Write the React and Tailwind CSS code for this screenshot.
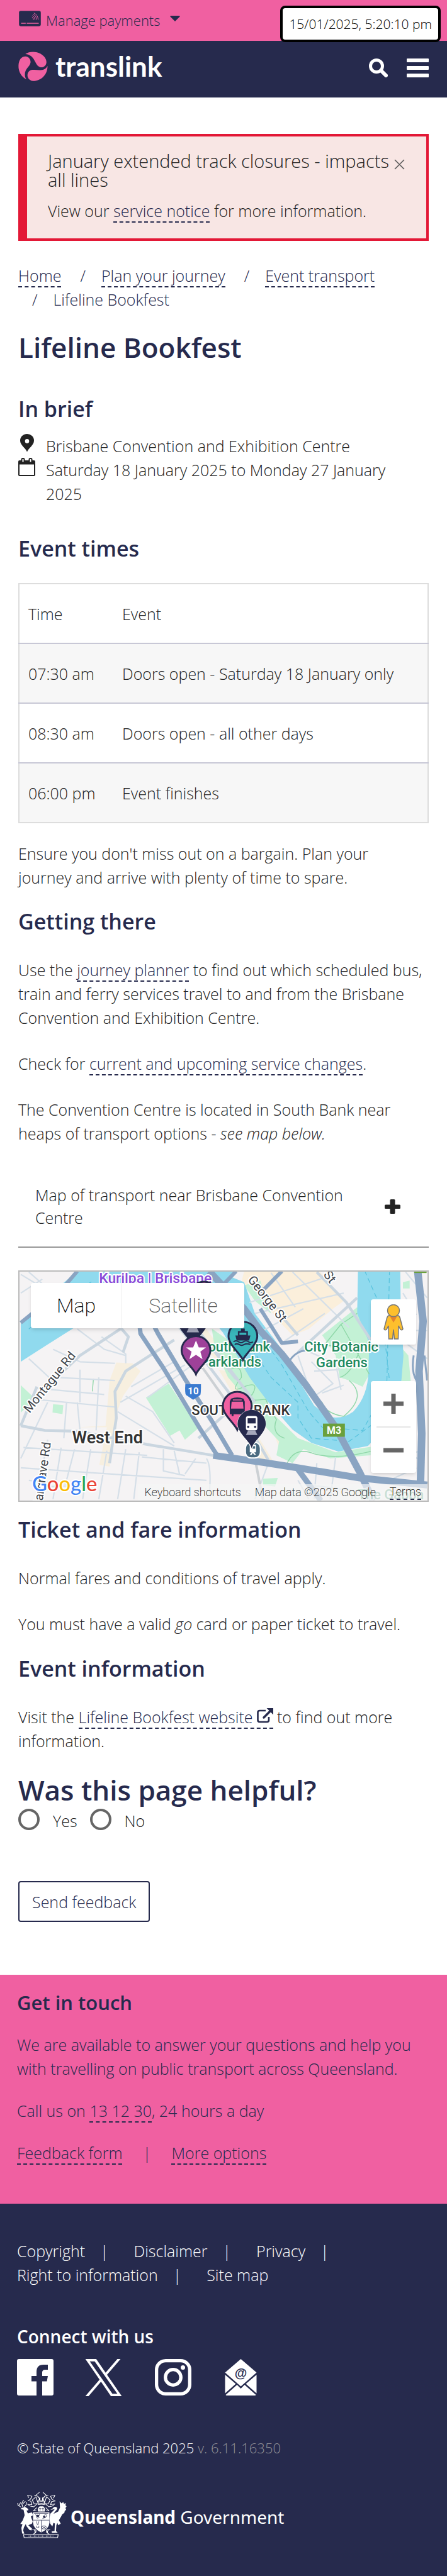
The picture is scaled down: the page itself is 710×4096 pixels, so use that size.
const body = "font-['Open_Sans',sans-serif] font-light";

function Dash({ href = "#", children }) {
  return (
    <a href={href} className="border-b-2 border-dashed border-[#262a4d] text-[#262a4d]">
      {children}
    </a>
  );
}

function H2({ className = "", children }) {
  return <h2 className={`text-[34px] leading-10 font-semibold text-[#262a4d] ${className}`}>{children}</h2>;
}

function CardIcon() {
  return (
    <svg viewBox="0 0 176 124" className="h-[25px] w-[35px]" aria-hidden="true">
      <rect x="1" y="1" width="174" height="122" rx="14" fill="#262a4d" />
      <g fill="none" stroke="#f060a1" strokeWidth="5" strokeLinecap="round">
        <path d="M20 100H52M65 100H156" strokeWidth="7" />
        <path d="M106 50Q116 55 117 70M110 39Q127 48 129 70M115 28Q139 40 142 70M121 18Q152 32 154 70" />
      </g>
    </svg>
  );
}

function LogoMark() {
  return (
    <svg viewBox="22 348 236 236" className="size-[47px]" fill="#f060a1" aria-hidden="true">
      <path d="M78 368C110 345 165 345 200 365C235 385 250 415 246 440C240 473 205 483 182 465C152 440 150 372 78 368Z" />
      <path d="M85 387C105 390 122 410 120 435C115 470 73 485 75 535C76 550 80 562 88 570C50 555 22 510 24 460C26 410 50 383 85 387Z" />
      <path d="M255 462C258 520 215 582 140 583C110 580 92 555 96 530C102 500 125 492 150 494C190 497 235 505 255 462Z" />
    </svg>
  );
}

function SearchIcon() {
  return (
    <svg viewBox="0 0 30 30" className="size-[30px]" fill="none" stroke="#fff" aria-hidden="true">
      <circle cx="12" cy="12" r="9.500" strokeWidth="5" />
      <path d="M19.500 19.500L27 27" strokeWidth="6" strokeLinecap="round" />
    </svg>
  );
}

function MenuIcon() {
  return (
    <svg viewBox="0 0 35 30" className="h-[30px] w-[35px]" fill="#fff" aria-hidden="true">
      <rect width="35" height="6" rx="1" />
      <rect y="12" width="35" height="6" rx="1" />
      <rect y="24" width="35" height="6" rx="1" />
    </svg>
  );
}

function PinIcon() {
  return (
    <svg viewBox="0 0 22 29" className="ml-[3px] h-[29px] w-[22px]" aria-hidden="true">
      <path fillRule="evenodd" fill="#222" d="M11 28.500C8.500 22 0 18 0 10.500A11 10.500 0 0 1 22 10.500C22 18 13.500 22 11 28.500ZM11 8A3.300 3.400 0 1 0 11 14.800A3.300 3.400 0 1 0 11 8Z" />
    </svg>
  );
}

function CalendarIcon() {
  return (
    <svg viewBox="0 0 27 29" className="h-[29px] w-[27px]" aria-hidden="true">
      <path fill="#222" fillRule="evenodd" d="M2 4H25A2 2 0 0 1 27 6V27A2 2 0 0 1 25 29H2A2 2 0 0 1 0 27V6A2 2 0 0 1 2 4ZM2 10.500V27H25V10.500Z" />
      <rect x="5.500" y="1" width="4" height="6.500" rx="1.500" fill="#fff" stroke="#222" strokeWidth="2" />
      <rect x="17.500" y="1" width="4" height="6.500" rx="1.500" fill="#fff" stroke="#222" strokeWidth="2" />
    </svg>
  );
}

function ExternalIcon() {
  return (
    <svg viewBox="0 0 26 24" className="ml-1.5 inline h-6 w-[26px] align-baseline" aria-hidden="true">
      <path d="M14 4H4.500Q1.500 4 1.500 7V19Q1.500 22 4.500 22H16Q19 22 19 19V14" fill="none" stroke="#262a4d" strokeWidth="2.600" />
      <path d="M11 15L22 4" stroke="#262a4d" strokeWidth="3.500" strokeLinecap="round" />
      <path d="M15.500 0H26V10.500Z" fill="#262a4d" />
    </svg>
  );
}

function MarkerShape({ x, y, w, h, fill, stroke, halo, children }) {
  return (
    <svg x={x} y={y} width={w} height={h} viewBox="0 0 50 66" overflow="visible">
      {halo && <path d="M25 63C21 53 3 39 3 25A22 22 0 0 1 47 25C47 39 29 53 25 63Z" fill="#fff" stroke="#fff" strokeWidth="6" />}
      <path d="M25 63C21 53 2 39 2 25A23 23 0 0 1 48 25C48 39 29 53 25 63Z" fill={fill} stroke={stroke} strokeWidth="3" />
      {children}
    </svg>
  );
}

function TrainGlyph() {
  return (
    <g>
      <rect x="15" y="11" width="20" height="25" rx="4" fill="#fff" />
      <rect x="18" y="15" width="14" height="9" fill="#262a4d" />
      <circle cx="19" cy="30" r="2" fill="#262a4d" />
      <circle cx="31" cy="30" r="2" fill="#262a4d" />
      <path d="M19 36H31L35 44H15Z" fill="#a5a7bb" />
    </g>
  );
}

function MapArt() {
  const s = { vectorEffect: "non-scaling-stroke" };
  return (
    <svg viewBox="0 0 652 368" preserveAspectRatio="xMidYMid slice" className="block h-full w-full font-['Roboto',sans-serif]" role="img" aria-label="Map of transport near Brisbane Convention Centre">
      <rect width="652" height="368" fill="#f5f3f4" />
      <g transform="translate(-10.9 -14.7) scale(.4301 .2496)" strokeLinejoin="round">
        {/* business precincts */}
        <path fill="#fbefdb" d="M860 60H1140L1230 250L1190 300L1100 430L1040 470L1000 400L920 230L850 130Z" />
        <path fill="#f7efdf" d="M385 645L445 650L475 700L410 860L390 950L375 1090L360 1312L322 1300L350 1060L240 1060L345 1050L360 760ZM765 690L800 700L870 900L905 1100L965 1270L915 1265L880 1100L820 850ZM960 1050L1070 1170L1000 1240Z" />
        <path fill="#f7efdf" d="M640 430L720 430L790 600L840 800L800 700L740 600Z" />
        {/* parks */}
        <g fill="#c3f1d5">
          <path d="M740 427L800 500L850 640L940 860L960 960L1060 1130L1200 1220L1330 1185V1240L1180 1260L1080 1200L1040 1290L980 1240L990 1150L930 1040L880 900L800 740L750 550Z" />
          <path d="M1280 290L1150 470L1200 600L1215 740L1250 760L1300 800L1325 720V500Z" />
          <path d="M495 870L580 780L690 1065L640 1140L620 1080L585 1115Z" />
          <path d="M30 790L85 880L30 965ZM150 912L188 918L185 975L148 965ZM860 150L920 120L960 330L900 250ZM930 1390L985 1385L975 1440L930 1430ZM1450 130L1475 120L1475 170H1450ZM1450 560L1470 600L1480 780L1440 760Z" />
        </g>
        {/* river */}
        <g fill="#90daee">
          <path d="M240 60H820L780 150L700 180L520 200L390 300L230 420L120 540L30 640V390L130 220Z" />
          <path d="M560 60H760L860 130L900 330L1000 560L1060 750L1120 920L1170 990Q1220 1015 1265 960Q1320 860 1322 700L1325 520L1280 330L1283 60H1440L1442 300L1452 600L1440 850L1390 1050L1320 1180L1210 1215L1110 1160L1040 1075L950 900L880 740L830 590L780 450L700 280Z" />
        </g>
        {/* ferry routes */}
        <g fill="none" stroke="#57c2dd" strokeWidth="1.200" strokeDasharray="8 5">
          <path style={s} d="M60 430L200 220L300 120M890 560L960 740L1060 900L1060 1000L1110 1130L1250 1150L1370 1000L1400 760L1370 300L1310 65M890 400L1000 660L1100 960L1150 1060L1300 1080L1390 800L1400 65" />
        </g>
        {/* paths inside the parks */}
        <g fill="none" stroke="#8fd7a8" strokeWidth="1.400">
          <path style={s} d="M800 700Q850 640 850 740Q800 850 860 800Q920 760 890 850Q850 900 940 880Q960 960 980 1010Q960 1100 1010 1130M1280 330L1220 400L1150 550M1220 400L1325 720M1150 540L1325 520M1215 740Q1260 720 1290 560M1020 1290Q1050 1180 1120 1230Q1200 1270 1330 1215M1250 760Q1320 860 1230 990Q1160 970 1150 900M300 750L296 830" />
        </g>
        {/* local streets */}
        <g fill="none" stroke="#d5dfe8" strokeWidth="2.200">
          <path style={s} d="M30 1260L130 900M40 1190L500 1240M30 1320L280 1350L720 1400M60 1400L300 1440M80 880L380 930M90 810L340 850M160 740L380 760M250 690L250 900M320 740L310 1080M200 900L190 1130M240 900L250 1080M130 1140L90 1500M180 1190L150 1520M230 1200L200 1400M290 1200L260 1520M350 1210L320 1520M420 1200L390 1520M470 1220L450 1520M560 1200V1340L640 1370M600 1210L620 1360M680 1260L640 1360M390 960L600 1180M400 900L480 820L640 660M420 860L520 960L600 1160M500 870L700 620M440 800L600 640M330 480L420 590L420 650M240 430L340 560L420 600M150 560L250 640L380 650M60 620L160 780M720 1260Q740 1310 730 1500M480 1250L720 1290M30 80L240 300M60 65L150 200M30 200L110 110M120 1440L310 1430M880 260L1160 100M900 330L1230 200M960 70L1050 290M1040 65L1250 420M930 440L1080 300M1000 520L1160 330M1060 600L1120 900L1180 980M1080 560L1200 650L1220 820M1110 640L1190 780L1130 850M1120 700L1220 690M1150 840L1230 790M950 1290L900 1520M1060 1400L1100 1520M1130 1290L1120 1520M1200 1250L1180 1520M1110 1430L1320 1480M1450 1060L1490 800M1440 1190L1530 1290M1450 1250L1530 1200M1400 1400L1500 1320M1450 200L1500 340M1460 65L1540 230M1450 440H1540M1460 520L1540 620" />
        </g>
        {/* main streets */}
        <g fill="none" stroke="#cad6e0" strokeWidth="4.500">
          <path style={s} d="M30 1050L120 1080L240 1085L500 1170L745 1240M360 1290L385 1000L380 830L420 700L600 500M340 300L430 480L410 580M90 860L250 600L400 430M30 1050L90 800M620 420L800 830L950 1270M680 420L830 750M750 560L900 900M800 960L690 1130M1130 65L1240 260L1330 500M1280 230L1060 580M1000 350L1060 470" />
        </g>
        {/* railway */}
        <path style={s} d="M690 640L780 860L850 1040L900 1260L930 1525" fill="none" stroke="#ccd0d4" strokeWidth="4" />
        {/* motorways */}
        <g fill="none" stroke="#8aa4c2">
          <path style={s} strokeWidth="11" d="M730 60L860 300L920 440L1000 590L1090 790L1200 1060L1290 1350L1340 1530" />
          <path style={s} strokeWidth="11" d="M745 1240L930 1285L1060 1320L1290 1385L1540 1430" />
          <path style={s} strokeWidth="7" d="M470 380L475 460L560 680L700 1080L760 1240M510 360L540 460L640 750L740 1020L815 1240" />
          <path style={s} strokeWidth="9" d="M1060 1330L1145 1530" />
          <path style={s} strokeWidth="12" d="M1505 60L1525 380L1510 700L1520 1100L1515 1430" />
          <path style={s} strokeWidth="6" d="M240 60L180 180L30 390M540 60L560 140M830 60L780 150M920 200L1000 60M920 300L1000 520L1060 510" />
          <path style={s} strokeWidth="3" d="M1030 630Q1060 560 1100 570M1490 600Q1480 700 1500 760M1530 600L1540 760" />
        </g>
        <path fill="#6aa03c" d="M1492 60H1538V71H1492Z" />
      </g>

      {/* place names */}
      <g stroke="#fff" strokeWidth="4" strokeLinejoin="round" paintOrder="stroke" fontWeight="500">
        <text x="127" y="19" fontSize="23" fill="#8a4bd8">Kurilpa | Brisbane</text>
        <g fontSize="22" fill="#1f8a60">
          <text x="455" y="129">City Botanic</text>
          <text x="474" y="154">Gardens</text>
          <text x="288" y="129">South Bank</text>
          <text x="288" y="153">Parklands</text>
          <text x="540" y="365" opacity="0.700">The Gabba</text>
        </g>
        <text x="84" y="276" fontSize="27" fill="#333" fontWeight="600">West End</text>
        <g fontSize="22" fill="#333">
          <text x="275" y="230">SOUTH</text>
          <text x="374" y="230">BANK</text>
        </g>
        <g fontSize="20" fill="#40444a" fontWeight="400">
          <text transform="translate(16 228) rotate(-51)">Montague Rd</text>
          <text transform="translate(364 14) rotate(52)">George St</text>
          <text transform="translate(485 6) rotate(52)">St</text>
          <text transform="translate(35 382) rotate(-82)">Hargrave Rd</text>
        </g>
      </g>

      {/* route shields */}
      <rect x="485" y="244" width="35" height="21" fill="#6aa03c" />
      <text x="491" y="260" fontSize="16" fontWeight="700" fill="#fff">M3</text>
      <path d="M265 181H290Q290 196 289 198L277.500 206L266 198Q264 195 265 181Z" fill="#3b7bd0" />
      <text x="269" y="197" fontSize="15" fontWeight="700" fill="#fff">10</text>

      {/* stops */}
      <MarkerShape x="270" y="15" w="50" h="66" fill="#f060a1" stroke="#262a4d" />
      <MarkerShape x="252" y="54" w="50" h="66" fill="#262a4d" stroke="#262a4d"><TrainGlyph /></MarkerShape>
      <MarkerShape x="332" y="79" w="50" h="66" fill="#39b5ba" stroke="#262a4d">
        <path d="M22 13H28V17H33V24H37L35 32H15L13 24H17V17H22Z" fill="#262a4d" />
        <path d="M19.500 19.500H30.500V23H19.500Z" fill="#39b5ba" />
        <path d="M10 34Q14 31 18 34T26 34T34 34T41 34M12 38.500Q15 36 19 38.500T27 38.500T37 38.500" fill="none" stroke="#262a4d" strokeWidth="2" />
      </MarkerShape>
      <MarkerShape x="257" y="102" w="50" h="66" fill="#9e4199" stroke="#262a4d">
        <path d="M25 9L29.500 20H41L32 27L35.500 39L25 32L14.500 39L18 27L9 20H20.500Z" fill="#fff" />
      </MarkerShape>
      <MarkerShape x="323" y="191" w="50" h="66" fill="#f060a1" stroke="#262a4d">
        <path fill="#262a4d" fillRule="evenodd" d="M15 13Q25 9 35 13L37 18V38H34V41H31V38H19V41H16V38H13V18ZM16 18L15 29H35L34 18ZM18 14.500V16H32V14.500Z" />
      </MarkerShape>
      <rect x="361" y="274" width="24" height="25" rx="9" fill="#4a6a80" stroke="#fff" strokeWidth="2" />
      <path fill="#fff" fillRule="evenodd" d="M368 278H378V290H375L378 294H375L373 291L371 294H368L371 290H368ZM369.500 280V284H376.500V280Z" />
      <MarkerShape x="348" y="221" w="46" h="62" fill="#262a4d" stroke="#262a4d" halo><TrainGlyph /></MarkerShape>

      <text x="20" y="352" fontSize="33" fontWeight="500" stroke="#fff" strokeWidth="4" paintOrder="stroke" strokeLinejoin="round" className="font-['Lato',sans-serif]">
        <tspan fill="#4285f4">G</tspan><tspan fill="#ea4335">o</tspan><tspan fill="#fbbc05">o</tspan><tspan fill="#4285f4">g</tspan><tspan fill="#34a853">l</tspan><tspan fill="#ea4335">e</tspan>
      </text>
    </svg>
  );
}

function Pegman() {
  return (
    <svg viewBox="0 0 32 56" className="h-[56px] w-8" aria-hidden="true">
      <path d="M8 18H24Q26 19 27 24L31 39Q30 42 27 40L24 34L23.500 55H17.500L16 40L14.500 55H8.500L8 34L5 40Q2 42 1 39L5 24Q6 19 8 18Z" fill="#fdbf2d" stroke="#777" strokeWidth="1.500" />
      <path d="M10 18.500H22L16 29Z" fill="#e5832d" />
      <circle cx="16" cy="10" r="9.500" fill="#fdbf2d" stroke="#777" strokeWidth="1.500" />
    </svg>
  );
}

function TransportMap() {
  return (
    <div className="relative mt-9 h-[368px] overflow-hidden border-2 border-[#bbb] font-['Roboto',sans-serif] font-light">
      <MapArt />
      <div className="absolute top-[18px] left-[18px] flex h-[72px] rounded-sm bg-white text-[32px] shadow-md">
        <button type="button" className="w-[145px] border-r border-[#eee] font-extralight text-black">Map</button>
        <button type="button" className="w-[194px] font-extralight text-[#565656]">Satellite</button>
      </div>
      <button type="button" aria-label="Street View" className="absolute top-11 right-[18px] flex h-[72px] w-[72px] items-center justify-center rounded-sm bg-white shadow-md">
        <Pegman />
      </button>
      <div className="absolute top-[174px] right-[18px] flex w-[72px] flex-col items-center rounded-sm bg-white shadow-md">
        <button type="button" aria-label="Zoom in" className="flex h-[72px] w-full items-center justify-center">
          <svg viewBox="0 0 32 32" className="size-8"><path d="M12.500 0H19.500V12.500H32V19.500H19.500V32H12.500V19.500H0V12.500H12.500Z" fill="#666" /></svg>
        </button>
        <hr className="w-[54px] border-t-2 border-[#e6e6e6]" />
        <button type="button" aria-label="Zoom out" className="flex h-[72px] w-full items-center justify-center">
          <svg viewBox="0 0 32 32" className="size-8"><path d="M0 12.500H32V19.500H0Z" fill="#666" /></svg>
        </button>
      </div>
      <div className="absolute right-0 bottom-0 flex h-[26px] items-center gap-[22px] bg-[#f5f5f5]/70 px-2.5 text-[18px] leading-[22px] font-extralight text-black">
        <button type="button">Keyboard shortcuts</button>
        <span>Map data ©2025 Google</span>
        <a href="#" className="border-b-2 border-dashed border-[#262a4d]">Terms</a>
      </div>
    </div>
  );
}

function Crest() {
  return (
    <svg viewBox="36 64 273 370" preserveAspectRatio="none" className="h-[74px] w-[79px]" aria-hidden="true">
      <g fill="#fff">
        {/* deer */}
        <path d="M58 196L80 184L98 202V212L88 214L96 236L118 228L124 250L112 262L122 300L118 318L98 330L118 356L116 372L104 368L88 338L84 322L74 346L70 372L76 398L64 396L60 352L66 322L54 320L68 290L78 250L72 208L56 202Z" />
        {/* brolga */}
        <path d="M232 196Q240 178 254 188Q262 200 246 220L236 240L262 222L272 190L270 140L280 156L290 146L294 160L304 154L302 172L308 180L302 194L306 206L298 218L296 232L284 244L278 262L266 290L276 318L262 330L258 312L252 330L250 376L260 390L228 392L226 380L242 376L244 316L236 312L230 340L218 318L214 280L218 240L238 212L244 200L218 210Z" />
        {/* shield */}
        <path d="M124 228H214V310Q212 358 169 388Q126 358 124 310Z" />
        {/* helmet */}
        <path d="M152 222Q146 196 160 180H180Q194 196 188 222Z" />
      </g>
      <g fill="none" stroke="#fff" strokeWidth="4" strokeLinejoin="round">
        <path d="M60 188L42 172L40 154M46 174L56 150M68 186L62 158L72 130M68 160L82 140M76 186L86 168L88 146" />
        <path d="M130 92L150 100L160 120L150 150L140 104L120 130L130 160L148 158L128 184L108 178L94 164L118 168L112 140L96 134L110 124L118 100L94 92L100 112" />
        <path d="M208 92L188 100L178 120L188 150L198 104L218 130L208 160L190 158L210 184L230 178L244 160L220 168L226 142L246 138L228 124L220 100L244 92L236 116" />
        <path d="M160 68L138 94M178 68L198 94M152 108L162 118L156 132H182L176 118L186 108M162 110V138M176 110V138M152 146Q170 138 186 146V160Q170 154 152 160ZM150 168Q170 160 190 168M144 190L126 216L142 212M194 190L212 216L196 212" />
        <path d="M130 368Q142 388 126 402M120 364Q148 358 138 390L124 402M208 368Q196 388 212 402M218 364Q190 358 200 390L214 402" />
        <path d="M72 404H262L259 429H75Z" />
      </g>
      <g fill="none" stroke="#262a4d" strokeWidth="3">
        <path d="M130 236H208M124 290H214M169 290V386" />
        <path d="M138 242L144 262H154L160 242M140 270Q150 280 160 268M178 262Q196 232 200 256Q194 276 176 276M142 300L148 326H152L156 300M144 334V350H156V334M176 340L192 358M192 340L176 358M163 192V214M157 198H169M178 192V214M172 198H184" />
        <circle cx="150" cy="256" r="7" fill="#262a4d" />
        <circle cx="186" cy="264" r="6" fill="#262a4d" />
        <circle cx="184" cy="348" r="13" />
      </g>
      <path d="M100 417H236" stroke="#fff" strokeWidth="11" strokeDasharray="3 4 5 3 2 5" opacity="0.600" />
    </svg>
  );
}

const events = [
  ["07:30 am", "Doors open - Saturday 18 January only"],
  ["08:30 am", "Doors open - all other days"],
  ["06:00 pm", "Event finishes"],
];

const footerLinks = ["Copyright", "Disclaimer", "Privacy", "Right to information", "Site map"];

export default function App() {
  return (
    <div className={`relative w-full bg-white text-[25px] leading-[38px] text-[#222] ${body}`}>
      <div className="flex h-[65px] items-start bg-[#f060a1] px-[30px] pt-[17px]">
        <button type="button" className="flex items-start gap-2 text-[22px] leading-[30px] text-[#262a4d]">
          <CardIcon />
          Manage payments
          <svg viewBox="0 0 16 9" className="mt-2 ml-2 h-[9px] w-4" aria-hidden="true"><path d="M1 0H15Q16 .5 15.500 1.500L8 9L.5 1.500Q0 .5 1 0Z" fill="#262a4d" /></svg>
        </button>
      </div>
      <div className="absolute top-[9px] right-[10px] rounded-lg border-4 border-black bg-white px-2.5 py-[10px] text-[21px] leading-[30px] text-black">
        15/01/2025, 5:20:10 pm
      </div>
      <header className="flex h-[90px] items-start justify-between bg-[#262a4d] px-[29px] pt-[17px]">
        <a href="#" className="flex items-center gap-3 text-[44px] leading-[47px] font-bold text-white font-['Lato',sans-serif]">
          <LogoMark />
          translink
        </a>
        <div className="flex items-center gap-[30px] pt-[11px]">
          <button type="button" aria-label="Search"><SearchIcon /></button>
          <button type="button" aria-label="Menu"><MenuIcon /></button>
        </div>
      </header>

      <main className="px-[29px] pb-[84px]">
        <section role="alert" className="mt-[58px] flex items-start border-4 border-l-[14px] border-[#e31836] bg-[#f8e6e4] pt-6 pr-[34px] pb-[25px] pl-[33px]">
          <div className="min-w-0 flex-1">
            <h2 className="text-[29px] leading-[30px]">January extended track closures - impacts all lines</h2>
            <p className="mt-[15px]">View our <Dash>service notice</Dash> for more information.</p>
          </div>
          <button type="button" aria-label="Close" className="mt-3 text-[#555]">
            <svg viewBox="0 0 17 17" className="size-[17px]" stroke="currentColor" strokeWidth="1.500"><path d="M1 1L16 16M16 1L1 16" /></svg>
          </button>
        </section>

        <nav aria-label="Breadcrumb" className="mt-9">
          <ol className="flex flex-wrap gap-x-2 text-[#262a4d]">
            <li><Dash>Home</Dash></li>
            <li className="flex gap-[25px] pl-[22px]"><span>/</span><span><Dash>Plan your journey</Dash></span></li>
            <li className="flex gap-[25px] pl-[22px]"><span>/</span><span><Dash>Event transport</Dash></span></li>
            <li className="flex gap-[25px] pl-[22px]"><span>/</span><span>Lifeline Bookfest</span></li>
          </ol>
        </nav>

        <h1 className="mt-[31px] text-[44px] leading-[52px] font-semibold text-[#262a4d]">Lifeline Bookfest</h1>

        <H2 className="mt-[52px]">In brief</H2>
        <ul className="mt-5 pr-8">
          <li className="grid grid-cols-[44px_1fr]"><PinIcon /><span>Brisbane Convention and Exhibition Centre</span></li>
          <li className="grid grid-cols-[44px_1fr]"><CalendarIcon /><span>Saturday 18 January 2025 to Monday 27 January 2025</span></li>
        </ul>

        <H2 className="mt-12">Event times</H2>
        <table className="mt-[35px] w-full border-collapse border-2 border-[#ddd] text-left">
          <thead>
            <tr className="h-[95px]">
              <th className="w-[148px] pl-[14px] font-light">Time</th>
              <th className="pl-4 font-light">Event</th>
            </tr>
          </thead>
          <tbody>
            {events.map(([time, name]) => (
              <tr key={time} className="h-[95px] border-t-2 border-[#c8c8d6] odd:bg-[#f7f7f7]">
                <td className="pl-[14px]">{time}</td>
                <td className="pl-4">{name}</td>
              </tr>
            ))}
          </tbody>
        </table>

        <p className="mt-[29px] pr-8">Ensure you don't miss out on a bargain. Plan your journey and arrive with plenty of time to spare.</p>

        <H2 className="mt-[31px]">Getting there</H2>
        <p className="mt-[38px]">Use the <Dash>journey planner</Dash> to find out which scheduled bus, train and ferry services travel to and from the Brisbane Convention and Exhibition Centre.</p>
        <p className="mt-[35px]">Check for <Dash>current and upcoming service changes</Dash>.</p>
        <p className="mt-[35px]">The Convention Centre is located in South Bank near heaps of transport options - <em>see map below.</em></p>

        <button type="button" className="mt-8 flex w-full items-center border-b-2 border-[#979797] pt-[29px] pr-[45px] pb-7 pl-[27px] text-left leading-9">
          <span className="flex-1 pr-10">Map of transport near Brisbane Convention Centre</span>
          <svg viewBox="0 0 25 23" className="h-[23px] w-[25px]" fill="#222" aria-hidden="true"><rect x="8.500" width="8" height="23" rx="1.500" /><rect y="8.500" width="25" height="6.500" rx="1.500" /></svg>
        </button>

        <TransportMap />

        <H2 className="mt-6">Ticket and fare information</H2>
        <p className="mt-[38px]">Normal fares and conditions of travel apply.</p>
        <p className="mt-[35px]">You must have a valid <em>go</em> card or paper ticket to travel.</p>

        <H2 className="mt-8">Event information</H2>
        <p className="mt-[38px]">Visit the <Dash>Lifeline Bookfest website<ExternalIcon /></Dash> to find out more information.</p>

        <form>
          <fieldset>
            <legend className="pt-[33px] text-[44px] leading-[52px] font-semibold text-[#262a4d]">Was this page helpful?</legend>
            <div className="mt-1 flex gap-5">
              {["Yes", "No"].map((v) => (
                <label key={v} className="flex items-start gap-[21px]">
                  <input type="radio" name="helpful" value={v} className="size-[34px] appearance-none rounded-full border-4 border-[#666]" />
                  {v}
                </label>
              ))}
            </div>
          </fieldset>
          <button type="submit" className="mt-[77px] block h-[65px] rounded border-2 border-[#262a4d] px-5 text-[#262a4d]">Send feedback</button>
        </form>
      </main>

      <section className="bg-[#f060a1] px-[27px] pt-6 pb-[62px] text-[#262a4d]">
        <h2 className="text-[31px] leading-10 font-semibold">Get in touch</h2>
        <p className="mt-7">We are available to answer your questions and help you with travelling on public transport across Queensland.</p>
        <p className="mt-[29px]">Call us on <Dash>13 12 30</Dash>, 24 hours a day</p>
        <div className="mt-[29px] flex">
          <span><Dash>Feedback form</Dash></span>
          <span className="w-[78px] text-center">|</span>
          <span><Dash>More options</Dash></span>
        </div>
      </section>

      <footer className="bg-[#262a4d] px-[27px] pt-14 pb-[60px] text-white">
        <ul className="flex flex-wrap gap-x-10">
          {footerLinks.map((label, i) => (
            <li key={label} className="flex gap-6">
              <a href="#">{label}</a>
              {i < footerLinks.length - 1 && <span>|</span>}
            </li>
          ))}
        </ul>
        <h2 className="mt-[60px] text-[28px] font-semibold">Connect with us</h2>
        <div className="mt-[17px] flex h-[58px] items-start">
          <a href="#" aria-label="Facebook" className="mr-[50px]">
            <svg viewBox="0 0 58 58" className="size-[58px]"><path fill="#fff" d="M3 0H55Q58 0 58 3V55Q58 58 55 58H40V35.500H47.500L49 27H40V21.500Q40 17 44.500 17H49V9H42Q31 9 31 20.500V27H23V35.500H31V58H3Q0 58 0 55V3Q0 0 3 0Z" /></svg>
          </a>
          <a href="#" aria-label="X" className="mr-[52px]">
            <svg viewBox="0 0 24 24" className="size-[59px]"><path fill="#fff" d="M14.234 10.162 22.977 0h-2.072l-7.591 8.824L7.251 0H.258l9.168 13.343L.258 24H2.330l8.016-9.318L16.749 24h6.993zm-2.837 3.299-.929-1.329L3.076 1.560h3.182l5.965 8.532.929 1.329 7.754 11.090h-3.182z" /></svg>
          </a>
          <a href="#" aria-label="Instagram" className="mr-[53px]">
            <svg viewBox="0 0 58 58" className="size-[58px]" fill="none" stroke="#fff" strokeWidth="5.300"><rect x="2.650" y="2.650" width="52.700" height="52.700" rx="14.500" /><circle cx="29" cy="29" r="12.300" /><circle cx="44.500" cy="13.500" r="3.500" fill="#fff" stroke="none" /></svg>
          </a>
          <a href="#" aria-label="Email">
            <svg viewBox="0 0 51 58" className="h-[58px] w-[51px]">
              <path fill="#fff" d="M25.500 0L50.500 21.500L25.500 43.500L.5 21.500ZM.5 25L17.500 39.500L.5 54.500ZM50.500 25L33.500 39.500L50.500 54.500ZM19.500 41L25.500 47L31.500 41L49.500 57Q49 58 48 58H3Q2 58 1.500 57Z" />
              <text x="25.500" y="29" textAnchor="middle" fontSize="20" fontWeight="700" fill="#262a4d" className="font-['Liberation_Sans',sans-serif]">@</text>
            </svg>
          </a>
        </div>
        <p className="mt-[67px] text-[22px] leading-8">© State of Queensland 2025 <span className="text-[#8f8f96]">v. 6.11.16350</span></p>
        <div className="mt-[54px] flex items-start gap-[6px]">
          <Crest />
          <p className="mt-[17px] text-[28px] leading-[46px] font-['Noto_Sans',sans-serif] font-normal"><strong className="font-bold">Queensland</strong> Government</p>
        </div>
      </footer>
    </div>
  );
}
